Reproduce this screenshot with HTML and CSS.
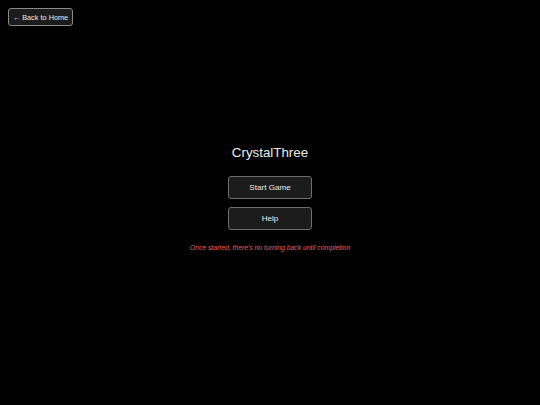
FILE: index.html
```html
<!DOCTYPE html>
<html lang="en">
<head>
<meta charset="utf-8">
<title>CrystalThree</title>
<link rel="stylesheet" href="styles.css">
</head>
<body>
<button class="back-btn">← Back to Home</button>
<main class="menu">
  <h1 class="title">CrystalThree</h1>
  <div class="actions">
    <button class="menu-btn">Start Game</button>
    <button class="menu-btn">Help</button>
  </div>
  <p class="warning">Once started, there's no turning back until completion</p>
</main>
</body>
</html>
```

FILE: styles.css
```css
html, body {
  margin: 0;
  padding: 0;
  background: #000;
  height: 100%;
}
body {
  font-family: "Liberation Sans", Arial, sans-serif;
  color: #e6e6e6;
}
.back-btn {
  position: fixed;
  top: 8px;
  left: 8px;
  width: 65px;
  height: 18px;
  padding: 0;
  background: #1c1c1c;
  color: #ececec;
  border: 1px solid #8a8a8a;
  border-radius: 3px;
  font-family: "Liberation Sans", Arial, sans-serif;
  font-size: 7.33px;
  cursor: pointer;
}
.menu {
  height: 100%;
  box-sizing: border-box;
  display: flex;
  flex-direction: column;
  align-items: center;
  justify-content: center;
  padding-bottom: 8px;
}
.title {
  margin: 0;
  font-size: 13.33px;
  font-weight: normal;
  line-height: 15.3px;
  color: #ededed;
}
.actions {
  display: flex;
  flex-direction: column;
  gap: 8px;
  margin-top: 16px;
}
.menu-btn {
  width: 84px;
  height: 23px;
  padding: 0;
  background: #1c1c1c;
  color: #ececec;
  border: 1px solid #6e6e6e;
  border-radius: 3px;
  font-family: "Liberation Sans", Arial, sans-serif;
  font-size: 8.1px;
  cursor: pointer;
}
.warning {
  margin: 14px 0 0;
  font-size: 6.8px;
  line-height: 7.8px;
  font-style: italic;
  color: #e06060;
}
```
